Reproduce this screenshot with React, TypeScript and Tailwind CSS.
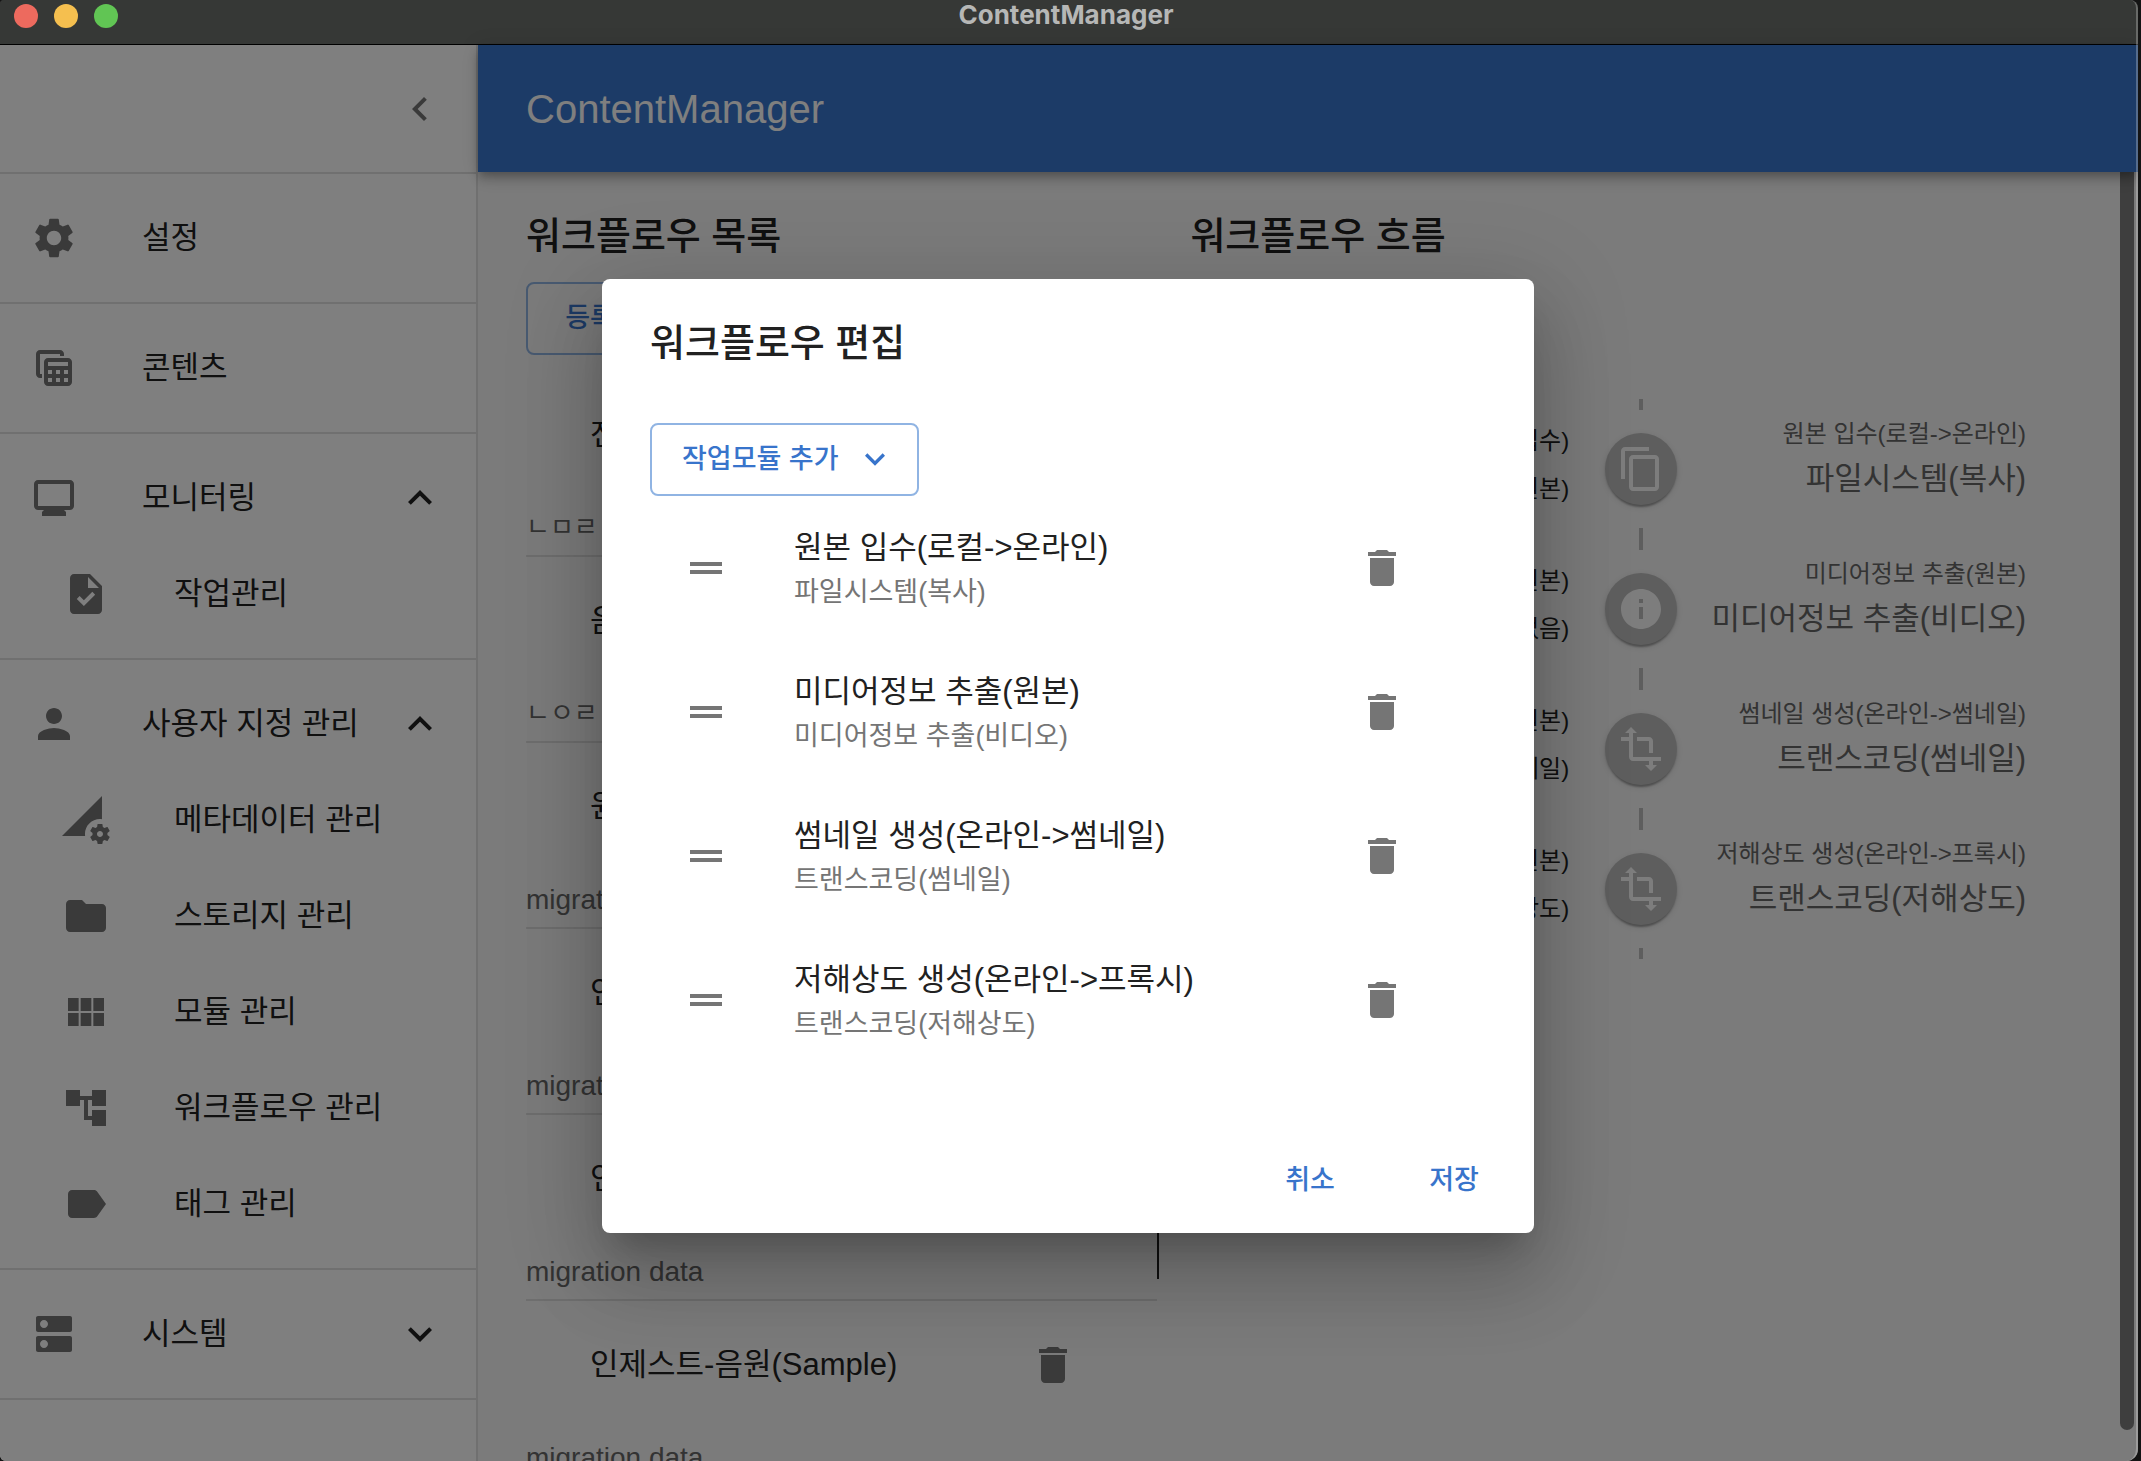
import React from "react";
import type { IconType } from "react-icons";
import {
  MdAccountTree,
  MdChevronLeft,
  MdContentCopy,
  MdDelete,
  MdDns,
  MdDragHandle,
  MdExpandLess,
  MdExpandMore,
  MdFolder,
  MdInfo,
  MdLabel,
  MdMonitor,
  MdPermDataSetting,
  MdPerson,
  MdSettings,
  MdTableView,
  MdTask,
  MdTransform,
} from "react-icons/md";

type IconLike = IconType | ((props: { className?: string }) => React.JSX.Element);

function ModuleIcon({ className }: { className?: string }) {
  return (
    <svg viewBox="0 0 24 24" fill="currentColor" className={className} aria-hidden="true">
      <path d="M14.67 5v6.5H9.33V5h5.34zm1 6.5H21V5h-5.33v6.5zm-1 7.5v-6.5H9.33V19h5.34zm1-6.5V19H21v-6.5h-5.33zm-7.34 0H3V19h5.33v-6.5zm0-1V5H3v6.5h5.33z" />
    </svg>
  );
}

interface NavEntry {
  label: string;
  icon: IconLike;
  expanded?: boolean;
  children?: { label: string; icon: IconLike }[];
}

const nav: NavEntry[] = [
  { label: "설정", icon: MdSettings },
  { label: "콘텐츠", icon: MdTableView },
  {
    label: "모니터링",
    icon: MdMonitor,
    expanded: true,
    children: [{ label: "작업관리", icon: MdTask }],
  },
  {
    label: "사용자 지정 관리",
    icon: MdPerson,
    expanded: true,
    children: [
      { label: "메타데이터 관리", icon: MdPermDataSetting },
      { label: "스토리지 관리", icon: MdFolder },
      { label: "모듈 관리", icon: ModuleIcon },
      { label: "워크플로우 관리", icon: MdAccountTree },
      { label: "태그 관리", icon: MdLabel },
    ],
  },
  { label: "시스템", icon: MdDns, expanded: false },
];

const workflows = [
  { name: "전송", note: "ㄴㅁㄹ", latin: false },
  { name: "음원 등록", note: "ㄴㅇㄹ", latin: false },
  { name: "원본 등록", note: "migration data", latin: true },
  { name: "인제스트-비디오", note: "migration data", latin: true },
  { name: "인제스트-이미지", note: "migration data", latin: true },
  { name: "인제스트-음원(Sample)", note: "migration data", latin: true },
];

const steps = [
  { title: "원본 입수(로컬->온라인)", kind: "파일시스템(복사)", from: "로컬(입수)", to: "온라인(원본)", icon: MdContentCopy },
  { title: "미디어정보 추출(원본)", kind: "미디어정보 추출(비디오)", from: "온라인(원본)", to: "출력(없음)", icon: MdInfo },
  { title: "썸네일 생성(온라인->썸네일)", kind: "트랜스코딩(썸네일)", from: "온라인(원본)", to: "썸네일(썸네일)", icon: MdTransform },
  { title: "저해상도 생성(온라인->프록시)", kind: "트랜스코딩(저해상도)", from: "온라인(원본)", to: "프록시(저해상도)", icon: MdTransform },
];

function TitleBar() {
  return (
    <header className="relative flex h-[45px] shrink-0 items-start justify-center border-b border-black bg-[#363836] pr-1.5">
      <div className="absolute top-1 left-[14px] flex gap-4">
        <button aria-label="닫기" className="size-6 rounded-full bg-[#ed6a5e]" />
        <button aria-label="최소화" className="size-6 rounded-full bg-[#f5bf4f]" />
        <button aria-label="최대화" className="size-6 rounded-full bg-[#61c554]" />
      </div>
      <p className="font-['Inter'] text-[26px] leading-[30px] font-bold text-[#b6b7b6]">ContentManager</p>
    </header>
  );
}

function Sidebar() {
  return (
    <nav className="w-[478px] shrink-0 border-r-2 border-[#e0e0e0] bg-white text-[31px] text-[#212121]">
      <div className="flex h-[129px] items-center justify-end border-b-2 border-[#e0e0e0] pr-8 text-[#757575]">
        <button aria-label="메뉴 접기">
          <MdChevronLeft className="size-12" />
        </button>
      </div>
      {nav.map((entry) => (
        <div key={entry.label} className="border-b-2 border-[#e0e0e0] py-4">
          <button className="flex h-24 w-full items-center pr-8 pl-[30px] text-left">
            <entry.icon className="mr-16 size-12 text-[#757575]" />
            <span className="flex-1">{entry.label}</span>
            {entry.expanded === true && <MdExpandLess className="size-12" />}
            {entry.expanded === false && <MdExpandMore className="size-12" />}
          </button>
          {entry.children?.map((child) => (
            <button key={child.label} className="flex h-24 w-full items-center pl-[62px] text-left">
              <child.icon className="mr-16 size-12 text-[#757575]" />
              {child.label}
            </button>
          ))}
        </div>
      ))}
    </nav>
  );
}

function WorkflowList() {
  return (
    <section>
      <h2 className="text-[38px] leading-[64px] font-medium">워크플로우 목록</h2>
      <button className="mt-[14px] mb-4 block h-[73px] w-32 rounded-lg border-2 border-[#90b4e3] text-[27px] font-medium text-[#3874cb]">
        등록
      </button>
      <ul>
        {workflows.map((workflow) => (
          <li key={workflow.name} className="border-b-2 border-[#dcdcdc]">
            <div className="flex h-32 items-center pr-20 pl-16 text-[31px]">
              <span className="flex-1">{workflow.name}</span>
              <button aria-label={`${workflow.name} 삭제`} className="text-[#757575]">
                <MdDelete className="size-12" />
              </button>
            </div>
            <p className={workflow.latin ? "h-14 text-[28px] leading-[58px] text-[#666]" : "h-14 text-[26px] leading-[56px] text-[#666]"}>
              {workflow.note}
            </p>
          </li>
        ))}
      </ul>
    </section>
  );
}

function WorkflowFlow() {
  return (
    <section className="pl-[31px]">
      <h2 className="text-[38px] leading-[64px] font-medium">워크플로우 흐름</h2>
      <ol className="mt-[131px]">
        {steps.map((step) => (
          <li key={step.title} className="grid h-[140px] grid-cols-[1fr_auto_1fr]">
            <div className="pt-[18px] pr-9 text-right text-2xl leading-[48px]">
              <p>{step.from}</p>
              <p>{step.to}</p>
            </div>
            <div className="flex flex-col items-center">
              <span className="w-1 flex-1 bg-[#bdbdbd]" />
              <span className="my-[23px] flex size-[72px] items-center justify-center rounded-full bg-[#bdbdbd] text-[#fafafa] shadow-[0_4px_2px_-2px_rgba(0,0,0,0.2),0_2px_2px_rgba(0,0,0,0.14),0_2px_6px_rgba(0,0,0,0.12)]">
                <step.icon className="size-12" />
              </span>
              <span className="w-1 flex-1 bg-[#bdbdbd]" />
            </div>
            <div className="pt-[14px] pr-[66px] text-right text-[#666]">
              <p className="text-2xl leading-[42px]">{step.title}</p>
              <p className="text-[31px] leading-[48px]">{step.kind}</p>
            </div>
          </li>
        ))}
      </ol>
    </section>
  );
}

function EditDialog() {
  return (
    <div
      role="dialog"
      aria-modal="true"
      aria-labelledby="dialog-title"
      className="w-[932px] rounded-lg bg-white shadow-[0_22px_30px_-14px_rgba(0,0,0,0.2),0_48px_76px_6px_rgba(0,0,0,0.14),0_18px_92px_16px_rgba(0,0,0,0.12)]"
    >
      <h2 id="dialog-title" className="px-12 py-8 text-[38px] leading-[64px] font-medium">
        워크플로우 편집
      </h2>
      <div className="px-12 pt-4 pb-14">
        <button className="flex h-[73px] items-center gap-4 rounded-lg border-2 border-[#90b4e3] pr-[22px] pl-[30px] text-[27px] font-medium text-[#3874cb]">
          작업모듈 추가
          <MdExpandMore className="size-10" />
        </button>
        <ul>
          {steps.map((step) => (
            <li key={step.title} className="flex h-36 items-center pr-20 pl-8">
              <MdDragHandle className="mr-16 size-12 text-[#757575]" />
              <div className="flex-1">
                <p className="text-[31px] leading-[48px]">{step.title}</p>
                <p className="text-[27px] leading-10 text-[#757575]">{step.kind}</p>
              </div>
              <button aria-label={`${step.title} 삭제`} className="text-[#757575]">
                <MdDelete className="size-12" />
              </button>
            </li>
          ))}
        </ul>
      </div>
      <div className="flex justify-end gap-4 p-4 text-[27px] font-medium text-[#3874cb]">
        <button className="h-[73px] w-32">취소</button>
        <button className="h-[73px] w-32">저장</button>
      </div>
    </div>
  );
}

export default function App() {
  return (
    <div className="h-screen bg-[#141414] pr-[3px] font-['Liberation_Sans','Noto_Sans_CJK_KR',sans-serif] text-[#212121]">
      <div className="relative flex h-full flex-col overflow-hidden rounded-tl-sm rounded-tr-lg rounded-br-xl rounded-bl-md bg-[#363836]">
        <TitleBar />
        <div className="relative flex min-h-0 flex-1">
          <Sidebar />
          <div className="flex min-w-0 flex-1 flex-col bg-[#f6f6f6]">
            <div className="relative z-10 flex h-[127px] shrink-0 items-center bg-[#3876ce] px-12 shadow-[0_4px_8px_-2px_rgba(0,0,0,0.2),0_8px_10px_rgba(0,0,0,0.14),0_2px_20px_rgba(0,0,0,0.12)]">
              <h1 className="text-[40px] text-white">ContentManager</h1>
            </div>
            <div className="flex min-h-0 flex-1">
              <main className="grid min-w-0 flex-1 grid-cols-[631fr_2px_932fr] overflow-hidden pt-8 pr-7 pl-12">
                <WorkflowList />
                <div className="mt-24 h-[979px] bg-[#212121]" />
                <WorkflowFlow />
              </main>
              <div className="mr-1 mb-[31px] w-[14px] rounded-b-full bg-[#7c7c7c]" />
            </div>
          </div>
          <div className="absolute inset-0 z-20 flex items-center justify-center bg-black/50 pt-[5px] pr-[2px]">
            <EditDialog />
          </div>
        </div>
        <div className="pointer-events-none absolute inset-0 z-30 rounded-tr-lg rounded-br-xl border-r-2 border-white/25" />
      </div>
    </div>
  );
}
